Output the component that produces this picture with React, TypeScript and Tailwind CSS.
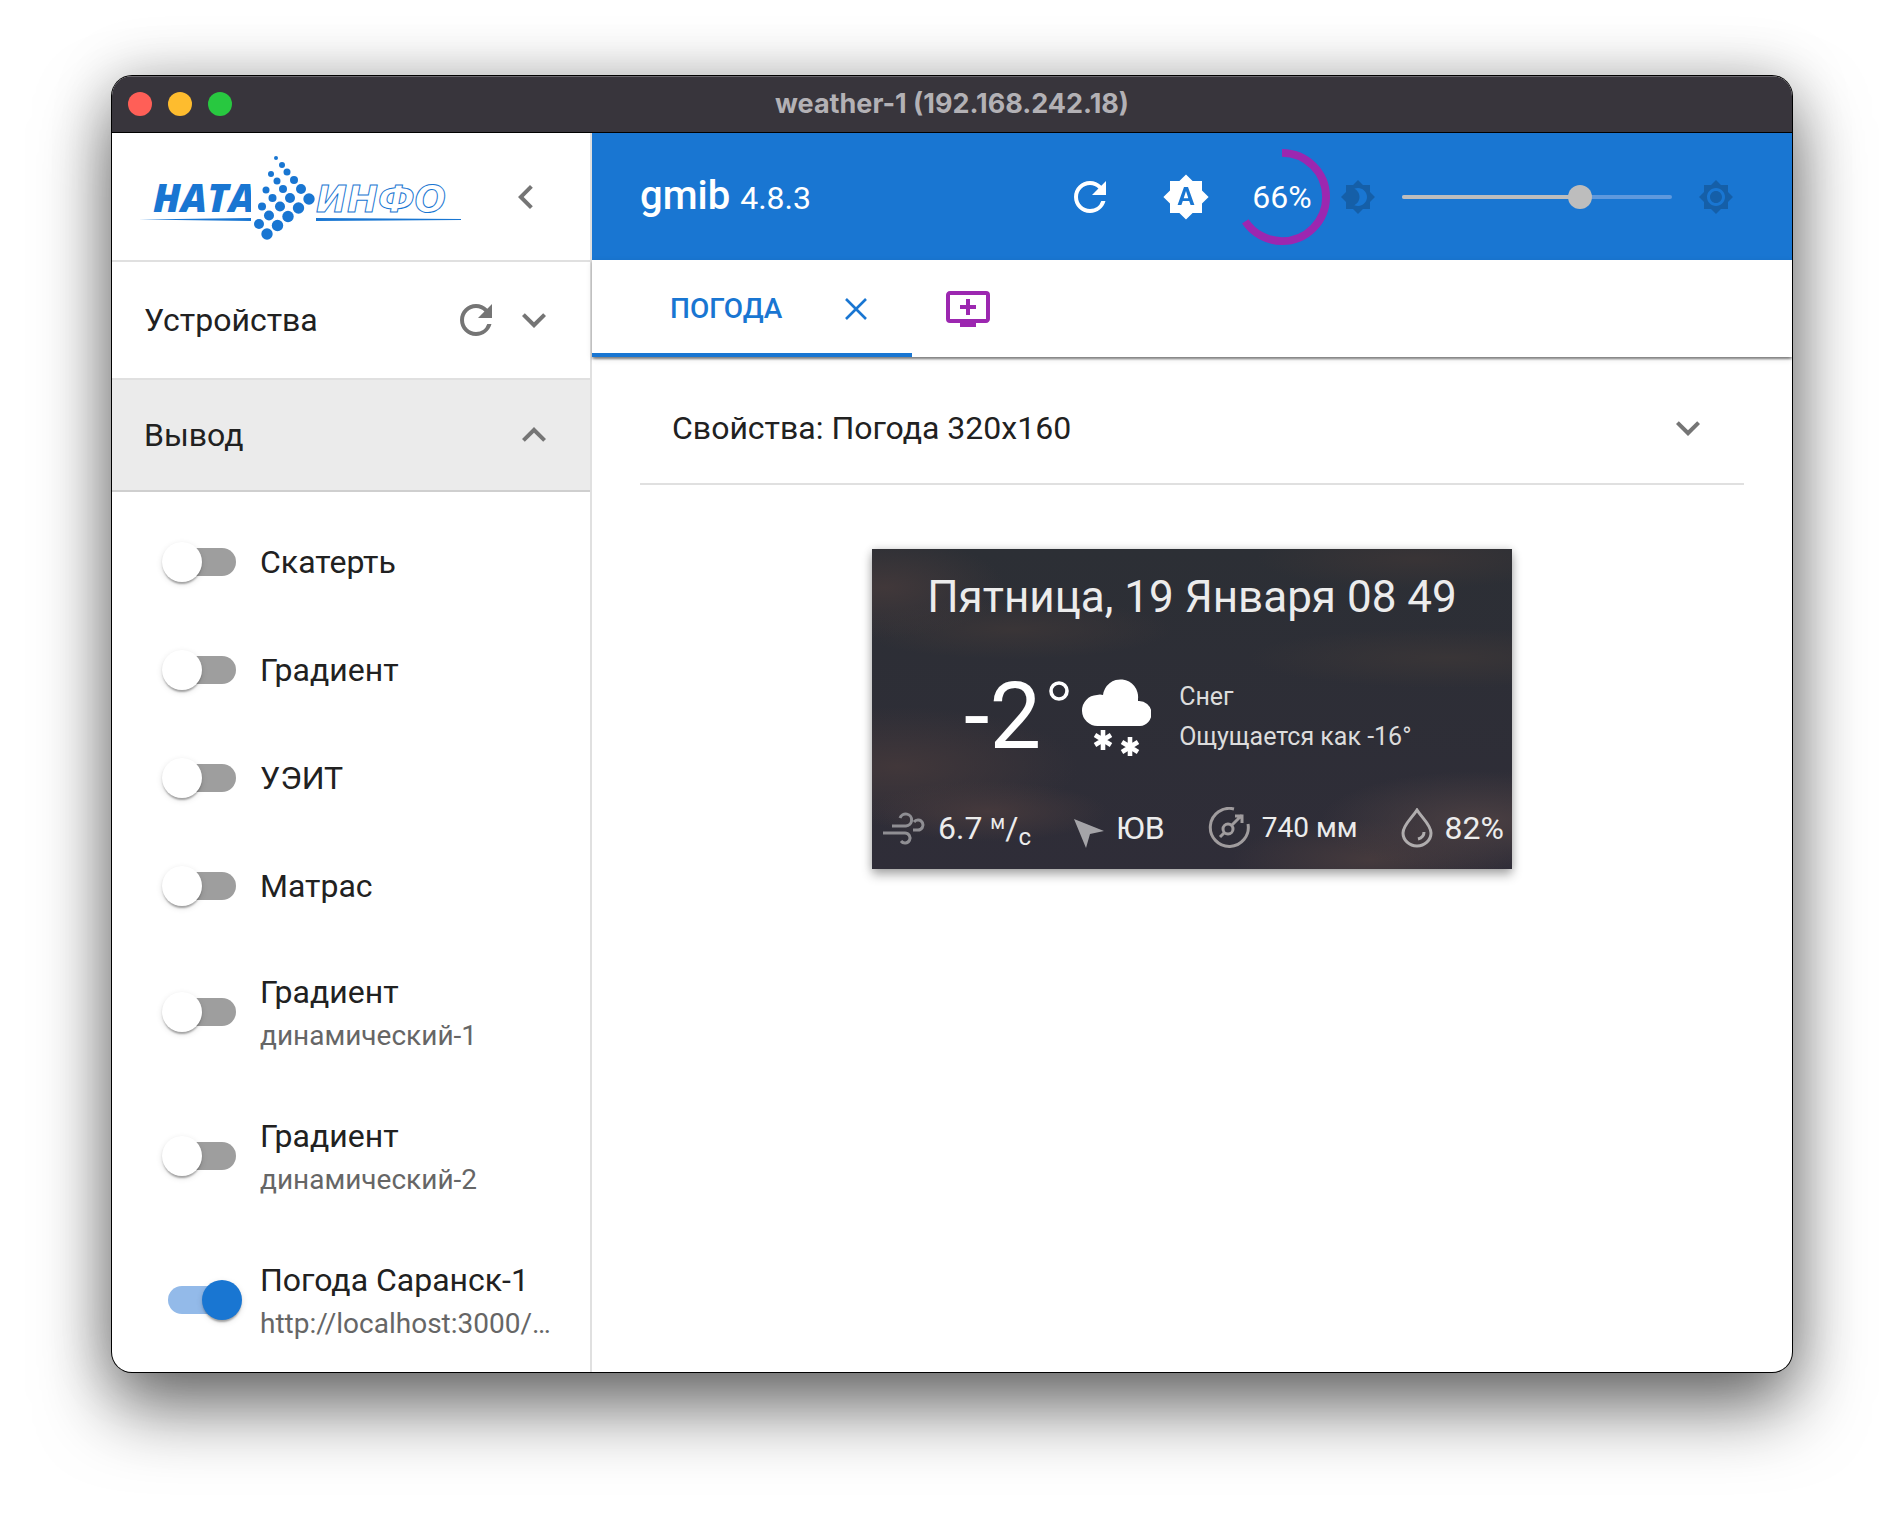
import { useState } from "react";
import type { ReactNode } from "react";
import {
  MdAddToQueue,
  MdBrightness4,
  MdBrightness7,
  MdBrightnessAuto,
  MdChevronLeft,
  MdExpandLess,
  MdExpandMore,
  MdRefresh,
} from "react-icons/md";

type Output = { name: string; note?: string; on?: boolean };

const outputs: Output[] = [
  { name: "Скатерть" },
  { name: "Градиент" },
  { name: "УЭИТ" },
  { name: "Матрас" },
  { name: "Градиент", note: "динамический-1" },
  { name: "Градиент", note: "динамический-2" },
  { name: "Погода Саранск-1", note: "http://localhost:3000/…", on: true },
];

const logoDots: [number, number, number][] = [
  [147, 16, 2],
  [153, 23, 3],
  [158, 30, 3.5],
  [165, 38, 4],
  [172, 47, 5],
  [180, 57, 5.7],
  [142, 32, 3],
  [148, 39, 3.5],
  [154, 47, 4],
  [161, 56, 5],
  [169.5, 66, 5.7],
  [137, 48, 3.5],
  [143.5, 56, 4],
  [151, 64.5, 5],
  [159, 74.5, 5.7],
  [133, 64.5, 4],
  [140, 73.5, 5],
  [148.5, 83.5, 5.7],
  [130, 82, 5],
  [138, 92, 5.7],
];

function Logo() {
  return (
    <svg viewBox="0 0 340 110" className="h-[110px] w-[340px]" role="img" aria-label="НАТА-ИНФО">
      <text x="24" y="70" fill="#1976d2" fontFamily="Open Sans" fontSize="39" fontWeight="800" fontStyle="italic">
        НАТА
      </text>
      <text
        x="187"
        y="70"
        fill="#fff"
        stroke="#1976d2"
        strokeWidth="1"
        fontFamily="DejaVu Sans"
        fontSize="37"
        fontWeight="700"
        fontStyle="italic"
      >
        ИНФО
      </text>
      <rect x="122" y="40" width="10" height="30" fill="#fff" />
      <path d="M10 77.5 L122 76 V79 Z" fill="#1976d2" />
      <path d="M187 76 L332 77 V78 L187 79 Z" fill="#1976d2" />
      {logoDots.map(([x, y, r]) => (
        <circle key={`${x}-${y}`} cx={x} cy={y} r={r} fill="#1976d2" />
      ))}
    </svg>
  );
}

function OutputRow({ item, id }: { item: Output; id: string }) {
  const [on, setOn] = useState(!!item.on);
  return (
    <li>
      <label htmlFor={id} className={`flex cursor-pointer items-center pr-6 pl-14 ${item.note ? "h-36" : "h-[108px]"}`}>
        <span className="relative h-7 w-[68px] shrink-0">
          <input
            id={id}
            type="checkbox"
            role="switch"
            checked={on}
            onChange={(e) => setOn(e.target.checked)}
            className="block h-7 w-[68px] cursor-pointer appearance-none rounded-full bg-[#9e9e9e] checked:bg-[#93bae9]"
          />
          <span
            className={`pointer-events-none absolute -top-1.5 h-10 w-10 rounded-full shadow-[0_4px_2px_-2px_rgba(0,0,0,0.2),0_2px_2px_rgba(0,0,0,0.14),0_2px_6px_rgba(0,0,0,0.12)] ${
              on ? "-right-1.5 bg-[#1976d2]" : "-left-1.5 bg-white"
            }`}
          />
        </span>
        <span className="ml-6 min-w-0 flex-1">
          <span className="block truncate text-[32px] leading-[48px]">{item.name}</span>
          {item.note && <span className="block truncate text-[28px] leading-10 text-[#666]">{item.note}</span>}
        </span>
      </label>
    </li>
  );
}

function Sidebar() {
  return (
    <aside className="flex w-[480px] shrink-0 flex-col border-r-2 border-[#e0e0e0]">
      <div className="box-content flex h-[127px] items-center justify-between border-b-2 border-[#e0e0e0] pr-10 pl-[17px]">
        <Logo />
        <button type="button" aria-label="Свернуть панель" className="text-[#757575]">
          <MdChevronLeft size={48} />
        </button>
      </div>
      <div className="box-content flex h-[116px] items-center border-b-2 border-[#e0e0e0] px-8">
        <h2 className="flex-1 text-[32px] leading-[48px]">Устройства</h2>
        <button type="button" aria-label="Обновить устройства" className="mr-2.5 text-[#757575]">
          <MdRefresh size={48} />
        </button>
        <button type="button" aria-label="Развернуть устройства" className="text-[#757575]">
          <MdExpandMore size={48} />
        </button>
      </div>
      <div className="box-content flex h-[110px] items-center border-b-2 border-[#cfcfcf] bg-[#ebebeb] px-8">
        <h2 className="flex-1 text-[32px] leading-[48px]">Вывод</h2>
        <button type="button" aria-label="Свернуть вывод" className="text-[#757575]">
          <MdExpandLess size={48} />
        </button>
      </div>
      <ul className="pt-4">
        {outputs.map((item, i) => (
          <OutputRow key={i} item={item} id={`output-${i}`} />
        ))}
      </ul>
    </aside>
  );
}

function AppBar() {
  const [level, setLevel] = useState(66);
  return (
    <header className="flex h-[127px] items-center bg-[#1976d2] pr-[58px] pl-12 text-white">
      <h1 className="flex-1 text-[40px] leading-[64px] font-medium">
        gmib <span className="text-[32px] font-normal">4.8.3</span>
      </h1>
      <button type="button" aria-label="Обновить">
        <MdRefresh size={48} />
      </button>
      <button type="button" aria-label="Автояркость" className="ml-12">
        <MdBrightnessAuto size={48} />
      </button>
      <div className="relative ml-6 flex h-24 w-24 items-center justify-center">
        <svg viewBox="22 22 44 44" className="absolute inset-0 -rotate-90">
          <circle
            cx="44"
            cy="44"
            r="20.2"
            fill="none"
            stroke="#9c27b0"
            strokeWidth="3.6"
            pathLength="100"
            strokeDasharray={`${level} 100`}
          />
        </svg>
        <span className="relative text-[32px] leading-[48px]">{level}%</span>
      </div>
      <MdBrightness4 size={36} className="ml-2.5 text-[#155fa8]" />
      <div className="relative mx-[26px] flex h-6 w-[270px] items-center">
        <div className="h-1 flex-1 overflow-hidden rounded-full bg-[#5f99dd]">
          <div className="h-1 bg-[#bdbdbd]" style={{ width: `${level}%` }} />
        </div>
        <input
          type="range"
          aria-label="Яркость"
          min={0}
          max={100}
          value={level}
          onChange={(e) => setLevel(Number(e.target.value))}
          className="absolute -left-3 h-6 w-[294px] cursor-pointer appearance-none bg-transparent [&::-webkit-slider-thumb]:h-6 [&::-webkit-slider-thumb]:w-6 [&::-webkit-slider-thumb]:appearance-none [&::-webkit-slider-thumb]:rounded-full [&::-webkit-slider-thumb]:bg-[#bdbdbd]"
        />
      </div>
      <MdBrightness7 size={36} className="text-[#155fa8]" />
    </header>
  );
}

function TabBar() {
  return (
    <nav className="flex h-[97px] shadow-[0_4px_2px_-2px_rgba(0,0,0,0.2),0_2px_2px_rgba(0,0,0,0.3),0_2px_6px_rgba(0,0,0,0.12)]">
      <div className="flex w-80 items-center pr-11 pl-[78px] text-[#1976d2] shadow-[inset_0_-4px_0_#1976d2]">
        <button type="button" className="flex-1 text-left text-[28px] leading-9 font-medium">
          ПОГОДА
        </button>
        <button type="button" aria-label="Закрыть вкладку">
          <svg viewBox="0 0 24 24" className="h-6 w-6" fill="none" stroke="currentColor" strokeWidth="2.6">
            <path d="M2 2 22 22M22 2 2 22" />
          </svg>
        </button>
      </div>
      <button type="button" aria-label="Добавить экран" className="ml-8 text-[#9c27b0]">
        <MdAddToQueue size={48} />
      </button>
    </nav>
  );
}

function Metric({ icon, children }: { icon: ReactNode; children: ReactNode }) {
  return (
    <div className="flex items-center gap-3">
      {icon}
      {children}
    </div>
  );
}

function WeatherCard() {
  return (
    <section
      aria-label="Погода"
      className="flex h-80 w-[640px] flex-col overflow-hidden bg-[#2e2d36] bg-[radial-gradient(ellipse_120px_30px_at_18%_82%,#45393c_0%,transparent_100%),radial-gradient(ellipse_180px_60px_at_4%_68%,#41373a_0%,transparent_100%),radial-gradient(ellipse_160px_50px_at_95%_85%,#4a3f42_0%,transparent_100%),radial-gradient(ellipse_140px_40px_at_78%_97%,#453a3d_0%,transparent_100%),radial-gradient(ellipse_120px_50px_at_2%_12%,#41383a_0%,transparent_100%),radial-gradient(ellipse_160px_30px_at_22%_25%,#3a3537_0%,transparent_100%),radial-gradient(ellipse_200px_30px_at_90%_34%,#393537_0%,transparent_100%),radial-gradient(ellipse_160px_30px_at_85%_3%,#393436_0%,transparent_100%),linear-gradient(#2c2f35,#2f2d38)] text-[#ececec] shadow-[0_6px_10px_rgba(0,0,0,0.3),0_0_8px_rgba(0,0,0,0.15)]"
    >
      <div className="mt-5 text-center text-[44px] leading-[56px] whitespace-nowrap">Пятница, 19 Января 08 49</div>
      <div className="mt-[42px] flex h-[100px] items-center pl-[92px] text-white">
        <span className="text-[92px] leading-[100px]">-2</span>
        <svg viewBox="0 0 106 78" className="ml-1 h-[78px] w-[106px]" fill="none">
          <circle cx="14" cy="13" r="8" stroke="#fff" strokeWidth="3.6" />
          <path
            d="M53 48a15.500 15.500 0 0 1-1-31 9 9 0 0 1 6 0 17.500 17.500 0 0 1 35 4v2a12.500 12.500 0 0 1 2 25z"
            fill="#fff"
          />
          <g stroke="#fff" strokeWidth="4.6">
            <path d="M58 52v20M50 57l16 10M66 57l-16 10M85 59v20M77 64l16 10M93 64l-16 10" />
          </g>
        </svg>
        <div className="ml-7 text-[25px] leading-10 text-[#dcdcdc]">
          <div>Снег</div>
          <div>Ощущается как -16°</div>
        </div>
      </div>
      <div className="mt-10 flex items-center justify-between pr-2 pl-2.5 text-[32px] leading-10 whitespace-nowrap">
        <Metric
          icon={
            <svg viewBox="0 0 44 34" className="h-[34px] w-11" fill="none" stroke="#8f8e93" strokeWidth="3">
              <path d="M10 15h14a6 6 0 1 0-6-8M31 19h5a5 5 0 1 0-4-8M1 22h22a5 5 0 1 1-4 8" />
            </svg>
          }
        >
          <span>
            6.7 <sup className="text-[20px]">м</sup>/<sub className="text-[24px]">с</sub>
          </span>
        </Metric>
        <Metric
          icon={
            <svg viewBox="0 0 30 30" className="mt-2.5 h-[30px] w-[30px]" fill="#a5a4a8">
              <path d="M0 1 30 13 16 16 12 30z" />
            </svg>
          }
        >
          <span>ЮВ</span>
        </Metric>
        <Metric
          icon={
            <svg viewBox="0 0 42 42" className="h-[42px] w-[42px]" fill="none" stroke="#a09c9e" strokeWidth="3">
              <path d="M26 2A19 19 0 1 0 40 17M24 18 34 8M27 9h7v7M12 30l5-5" />
              <circle cx="20" cy="22" r="5" />
            </svg>
          }
        >
          <span className="text-[28px]">740 мм</span>
        </Metric>
        <Metric
          icon={
            <svg viewBox="0 0 32 40" className="h-10 w-8" fill="none" stroke="#b0adae" strokeWidth="3">
              <path d="M16 2C11 10 2 17 2 25a14 13 0 0 0 28 0C30 17 21 10 16 2zM23 24c0 4-2 6-6 7" />
            </svg>
          }
        >
          <span>82%</span>
        </Metric>
      </div>
    </section>
  );
}

export default function App() {
  return (
    <div className="min-h-screen bg-white px-28 pt-[76px] pb-[148px] font-[Roboto,sans-serif] text-[#212121]">
      <div className="overflow-hidden rounded-[20px] bg-white shadow-[0_0_0_1px_#000,0_36px_72px_rgba(0,0,0,0.55),0_0_60px_rgba(0,0,0,0.22)]">
        <div className="grid h-[57px] grid-cols-[1fr_auto_1fr] items-center border-b border-black bg-[#38353c] px-4 shadow-[inset_0_1px_0_#6b686e]">
          <div className="flex gap-4">
            <button type="button" aria-label="Закрыть" className="h-6 w-6 rounded-full bg-[#ff5f57]" />
            <button type="button" aria-label="Свернуть" className="h-6 w-6 rounded-full bg-[#febc2e]" />
            <button type="button" aria-label="Развернуть" className="h-6 w-6 rounded-full bg-[#28c840]" />
          </div>
          <div className="font-[Inter,sans-serif] text-[27px] leading-8 font-bold text-[#b3b1b5]">
            weather-1 (192.168.242.18)
          </div>
        </div>
        <div className="flex">
          <Sidebar />
          <main className="min-w-0 flex-1">
            <AppBar />
            <TabBar />
            <div className="px-12 pt-4">
              <div className="flex h-28 items-center border-b-2 border-[#e0e0e0] px-8">
                <h2 className="flex-1 text-[32px] leading-[48px]">Свойства: Погода 320x160</h2>
                <button type="button" aria-label="Развернуть свойства" className="text-[#757575]">
                  <MdExpandMore size={48} />
                </button>
              </div>
              <div className="mt-16 flex justify-center">
                <WeatherCard />
              </div>
            </div>
          </main>
        </div>
      </div>
    </div>
  );
}
